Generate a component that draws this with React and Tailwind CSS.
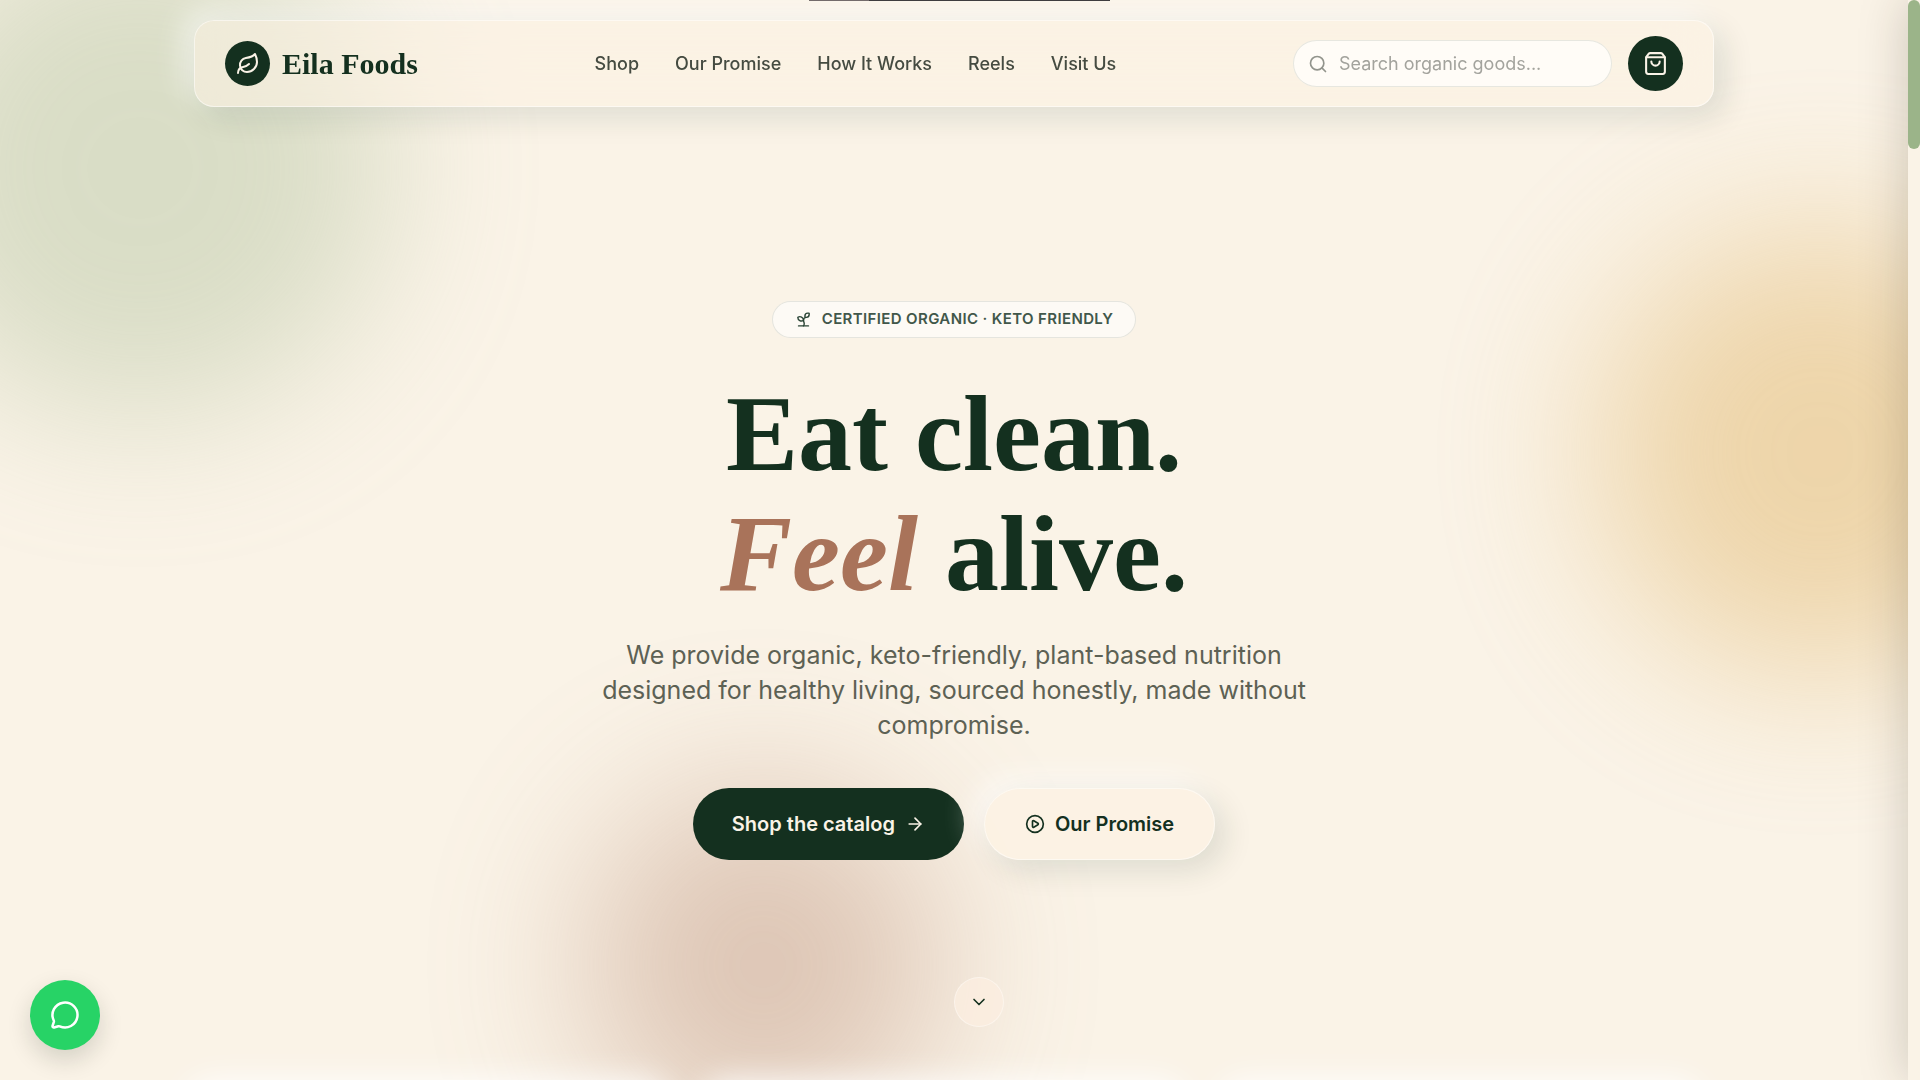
import React from "react";
import { Leaf, Search, ShoppingBag, Sprout, ArrowRight, CirclePlay, ChevronDown, MessageCircle } from "lucide-react";

const links = ["Shop", "Our Promise", "How It Works", "Reels", "Visit Us"];

function Blobs() {
  return (
    <div aria-hidden="true" className="pointer-events-none">
      <div className="absolute -left-[110px] -top-[82px] size-[500px] rounded-full bg-[#9db58a] opacity-35 blur-[75px]" />
      <div className="absolute -right-[137px] top-[227px] size-[450px] rounded-full bg-[#dfb160] opacity-45 blur-[80px]" />
      <div className="absolute left-[40%] -bottom-[65px] size-[360px] -translate-x-1/2 rounded-full bg-[#a9735a] opacity-35 blur-[80px]" />
    </div>
  );
}

function Header() {
  return (
    <header className="relative mx-auto mt-5 flex w-full max-w-[1520px] items-center justify-between rounded-[20px] border border-white/50 bg-[#fcf2e3]/60 px-[30px] py-[15px] shadow-[10px_10px_30px_rgba(20,48,31,0.12),-10px_-10px_30px_rgba(255,255,255,0.6)] backdrop-blur-xl">
      <a href="#top" className="flex items-center gap-3">
        <span className="flex size-[45px] items-center justify-center rounded-full bg-[#14301f]">
          <Leaf size={24} strokeWidth={2} className="text-[#faf3e7]" />
        </span>
        <span className="font-['Liberation_Serif',serif] text-[30px] font-bold leading-9 text-[#14301f]">Eila Foods</span>
      </a>
      <nav className="flex items-center gap-9">
        {links.map((l) => (
          <a key={l} href="#section" className="text-lg font-medium text-[#454b41]">{l}</a>
        ))}
      </nav>
      <div className="flex items-center gap-4">
        <label className="flex h-[47px] w-[319px] items-center gap-[11px] rounded-full border border-[#14301f]/10 bg-[#fffcf7] px-[14px]">
          <Search size={20} strokeWidth={2} className="shrink-0 text-[#92948c]" />
          <input
            type="search"
            aria-label="Search organic goods"
            placeholder="Search organic goods..."
            className="w-full min-w-0 bg-transparent text-lg text-[#454b41] outline-none placeholder:text-[#a3a39d]"
          />
        </label>
        <button type="button" aria-label="Cart" className="flex size-[55px] items-center justify-center rounded-full bg-[#14301f] text-[#faf3e7]">
          <ShoppingBag size={25} strokeWidth={2} />
        </button>
      </div>
    </header>
  );
}

function Hero() {
  return (
    <section className="relative mt-[194px] flex flex-col items-center text-center">
      <p className="flex h-[37px] items-center gap-[10px] rounded-full border border-[#14301f]/10 bg-[#fdfaf5] px-[22px] text-[15px] font-semibold tracking-wide text-[#41574a]">
        <Sprout size={17} strokeWidth={2} className="text-[#2a4435]" />
        CERTIFIED ORGANIC · KETO FRIENDLY
      </p>
      <h1 className="mt-9 font-['Liberation_Serif',serif] text-[108px] font-bold leading-[120px] text-[#14301f]">
        Eat clean.
        <br />
        <em className="text-[#a9735a]">Feel</em> alive.
      </h1>
      <p className="mt-6 max-w-[720px] text-[25px] leading-[35px] text-[#5d6154]">
        We provide organic, keto-friendly, plant-based nutrition designed for healthy living, sourced honestly, made without compromise.
      </p>
      <div className="mt-[45px] flex gap-5">
        <button type="button" className="flex h-[72px] items-center gap-[10px] rounded-full bg-[#14301f] px-[39px] text-xl font-semibold text-[#faf3e7]">
          Shop the catalog
          <ArrowRight size={20} strokeWidth={2} />
        </button>
        <button type="button" className="flex h-[72px] items-center gap-[10px] rounded-full border border-white/50 bg-[#fcf2e3]/90 px-10 text-xl font-semibold text-[#14301f] shadow-[10px_10px_30px_rgba(20,48,31,0.12),-10px_-10px_30px_rgba(255,255,255,0.6)]">
          <CirclePlay size={20} strokeWidth={2} />
          Our Promise
        </button>
      </div>
    </section>
  );
}

export default function App() {
  return (
    <div id="top" className="flex h-screen bg-[#faf3e7] font-['Inter',sans-serif]">
      <div className="relative flex min-w-0 flex-1 flex-col overflow-hidden">
        <Blobs />
        <div aria-hidden="true" className="absolute left-[809px] top-0 flex h-px w-[301px]">
          <span className="w-[60px] bg-[#5a5050]" />
          <span className="flex-1 bg-[#1c1a1c]" />
        </div>
        <Header />
        <Hero />
        <button type="button" aria-label="Scroll down" className="absolute bottom-[53px] left-1/2 flex size-[50px] items-center justify-center rounded-full border border-white/40 bg-[#fbeee0]/80 text-[#14301f]">
          <ChevronDown size={20} strokeWidth={2} />
        </button>
        <button type="button" aria-label="Chat with us" className="absolute bottom-[30px] left-[30px] flex size-[70px] items-center justify-center rounded-full bg-[#27d366] text-white shadow-[0_10px_25px_rgba(20,30,20,0.16)]">
          <MessageCircle size={30} strokeWidth={2} />
        </button>
        <div aria-hidden="true" className="absolute inset-x-0 top-full mx-auto mt-2 grid max-w-[1520px] grid-cols-3 gap-[30px]">
          <div className="h-40 rounded-[30px] shadow-[-10px_-10px_30px_rgba(255,255,255,0.8)]" />
          <div className="h-40 rounded-[30px] shadow-[-10px_-10px_30px_rgba(255,255,255,0.8)]" />
          <div className="h-40 rounded-[30px] shadow-[-10px_-10px_30px_rgba(255,255,255,0.8)]" />
        </div>
        <div aria-hidden="true" className="absolute inset-y-0 left-full w-20 shadow-[0_0_50px_rgba(40,30,20,0.22)]" />
      </div>
      <div aria-hidden="true" className="w-3 shrink-0 bg-[#faf3e7]">
        <div className="h-[149px] rounded-full bg-[#9bb489]" />
      </div>
    </div>
  );
}
